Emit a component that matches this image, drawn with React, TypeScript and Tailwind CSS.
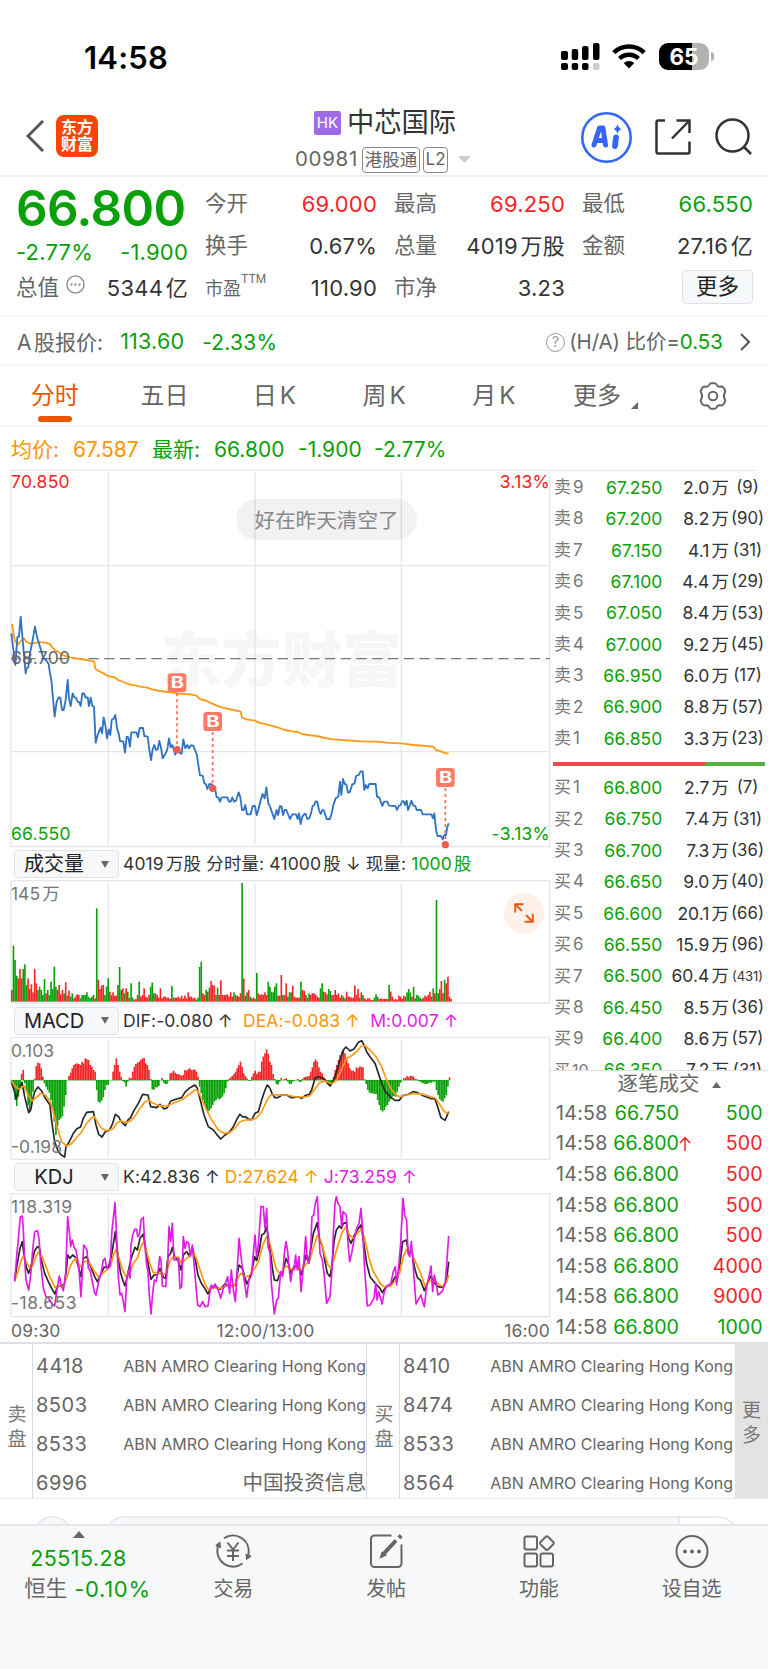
import type { ReactNode } from "react";
import clsx from "clsx";

const GREEN = "#09a009";
const RED = "#f32427";
const ORANGE = "#ff9500";
const MAGENTA = "#e21ae8";

const asks = [
  ["卖9", "67.250", "2.0万", "(9)"],
  ["卖8", "67.200", "8.2万", "(90)"],
  ["卖7", "67.150", "4.1万", "(31)"],
  ["卖6", "67.100", "4.4万", "(29)"],
  ["卖5", "67.050", "8.4万", "(53)"],
  ["卖4", "67.000", "9.2万", "(45)"],
  ["卖3", "66.950", "6.0万", "(17)"],
  ["卖2", "66.900", "8.8万", "(57)"],
  ["卖1", "66.850", "3.3万", "(23)"],
];

const bids = [
  ["买1", "66.800", "2.7万", "(7)"],
  ["买2", "66.750", "7.4万", "(31)"],
  ["买3", "66.700", "7.3万", "(36)"],
  ["买4", "66.650", "9.0万", "(40)"],
  ["买5", "66.600", "20.1万", "(66)"],
  ["买6", "66.550", "15.9万", "(96)"],
  ["买7", "66.500", "60.4万", "(431)"],
  ["买8", "66.450", "8.5万", "(36)"],
  ["买9", "66.400", "8.6万", "(57)"],
  ["买10", "66.350", "7.2万", "(31)"],
];

const ticks = [
  { price: "66.750", volume: "500", up: false },
  { price: "66.800", volume: "500", up: true, arrow: true },
  { price: "66.800", volume: "500", up: true },
  { price: "66.800", volume: "500", up: true },
  { price: "66.800", volume: "500", up: true },
  { price: "66.800", volume: "4000", up: true },
  { price: "66.800", volume: "9000", up: true },
  { price: "66.800", volume: "1000", up: false },
];

const BROKER = "ABN AMRO Clearing Hong Kong";
const sellBrokers = [
  ["4418", BROKER],
  ["8503", BROKER],
  ["8533", BROKER],
  ["6996", "中国投资信息"],
];
const buyBrokers = [
  ["8410", BROKER],
  ["8474", BROKER],
  ["8533", BROKER],
  ["8564", BROKER],
];

// chart series, three units per pixel; the afternoon half starts at x = 810
const price = {
  am: "34,520 46,615 52,532 57,530 62,470 68,540 77,640 80,625 85,622 90,580 97,545 105,500 112,535 120,560 130,595 138,600 146,612 150,640 154,660 164,770 170,725 176,712 181,713 186,750 191,750 197,720 203,660 207,715 212,738 218,700 223,712 228,713 233,725 238,727 242,738 247,700 252,700 257,713 263,712 267,738 272,713 277,738 282,740 287,848 292,828 297,815 302,803 306,820 311,772 316,795 321,835 326,808 331,825 335,780 341,776 346,765 351,805 356,820 360,843 370,845 375,878 380,830 385,832 390,860 394,817 409,817 414,832 419,804 429,804 433,828 443,830 448,870 453,900 458,868 463,855 468,870 473,868 478,843 484,868 488,895 497,880 502,868 507,835 512,862 517,855 526,884 533,860 540,880 545,881 550,838 556,865 562,855 567,865 573,856 580,857 585,870 590,882 595,915 600,946 608,947 613,970 618,973 622,987 628,972 636,973 640,990 646,990 650,1012 655,1012 660,1025 665,1012 682,1012 687,1025 692,1025 697,1012 702,1025 708,1022 716,997 721,1012 726,1050 731,1050 736,1035 741,1063 752,1063 758,1038 765,1038 770,1065 775,1050 782,1020 788,1002 794,1015 799,982 805,1030 810,1040",
  pm: "0,1040 13,1077 20,1050 24,1065 30,1038 35,1040 39,1065 44,1050 49,1050 60,1077 67,1063 78,1063 83,1077 87,1060 92,1092 97,1070 103,1062 107,1062 112,1077 118,1075 123,1060 128,1038 133,1035 137,1024 142,1025 147,1050 152,1062 157,1050 162,1052 170,1077 180,1077 185,1060 190,1035 197,1015 205,1010 210,965 214,1005 219,957 224,972 229,973 234,998 239,997 247,973 254,970 258,948 266,945 272,934 278,934 283,990 288,975 293,985 298,972 317,972 321,1010 328,1013 337,1038 342,1025 352,1025 357,1037 376,1038 381,1050 386,1038 392,1035 397,1023 402,1025 405,1035 410,1022 414,1050 419,1038 424,1022 430,1037 436,1038 440,1050 453,1050 458,1063 484,1063 489,1075 493,1060 496,1090 499,1115 503,1128 513,1128 518,1138 523,1125 528,1125 531,1105 536,1090",
};
const average = {
  am: "36,492 41,525 46,545 54,553 62,544 72,535 80,546 92,551 106,549 115,546 130,547 150,552 156,562 165,570 176,577 190,586 210,592 240,597 270,602 282,604 286,626 296,633 310,640 324,648 346,653 354,660 370,666 390,674 408,676 420,680 442,683 455,688 480,693 510,697 540,701 570,703 588,706 600,717 620,723 636,731 650,737 668,743 700,750 722,755 726,773 740,778 765,782 775,787 800,793 810,796",
  pm: "0,796 25,803 45,810 65,814 85,816 95,822 115,825 140,828 165,834 190,838 230,841 275,844 320,845 350,848 400,851 430,855 470,858 490,860 498,870 515,875 528,880 536,880",
};
const dif = {
  am: "34,710 42,735 49,762 56,735 66,712 74,755 86,803 92,795 98,765 104,740 114,726 125,738 135,758 150,780 154,820 164,890 175,920 184,930 194,936 198,905 208,890 220,865 230,852 242,845 250,820 260,802 280,800 288,840 296,868 306,876 316,860 328,856 338,835 346,808 356,815 362,828 376,842 384,825 392,818 400,800 415,775 428,748 444,750 452,785 470,788 480,778 492,792 502,788 512,768 530,762 545,758 556,740 570,728 585,720 592,730 600,762 612,810 625,845 640,855 650,868 662,882 675,870 688,862 700,845 712,820 720,808 728,816 736,815 745,822 755,825 765,805 775,800 785,765 795,735 802,720 810,730",
  pm: "0,730 6,745 14,758 24,758 36,750 50,750 64,758 85,756 95,760 105,752 118,748 125,735 135,700 145,695 160,700 170,712 180,723 190,708 200,680 210,645 220,615 228,606 240,618 252,612 265,592 275,587 282,600 290,620 300,635 315,655 325,685 335,715 345,738 360,755 375,766 388,766 398,752 415,748 430,740 440,742 460,752 480,760 495,762 503,785 513,818 525,826 530,815 536,800",
};
const dea = {
  am: "34,708 44,722 54,732 64,728 72,722 82,745 96,768 108,758 122,745 136,750 150,768 160,800 172,850 185,890 200,903 212,898 228,880 245,860 260,835 275,818 283,815 292,830 305,850 320,857 338,852 350,835 362,828 378,833 392,828 404,815 420,790 435,770 446,765 458,774 480,782 500,784 520,774 545,765 565,750 585,735 592,736 602,755 615,785 635,825 655,855 672,865 690,862 705,850 718,832 735,825 755,825 770,818 785,800 800,768 810,752",
  pm: "0,752 8,748 20,750 50,750 80,756 105,756 120,752 135,732 150,712 165,708 185,716 200,706 215,672 230,640 245,632 262,618 275,602 285,602 300,615 318,635 335,665 350,705 365,735 380,752 390,755 410,750 430,745 460,748 485,756 497,760 510,780 522,798 530,805 536,803",
};
const kLine = {
  am: "44,360 52,310 60,265 67,245 72,285 80,325 86,340 94,315 104,272 112,260 118,262 124,300 134,340 145,365 155,385 165,402 172,380 185,378 194,370 200,320 203,285 210,295 218,285 226,292 234,315 243,350 250,295 260,290 268,310 276,330 284,350 292,365 302,345 312,322 326,320 334,290 346,215 354,290 362,340 370,365 375,378 382,350 392,300 405,262 412,270 420,235 430,222 438,270 446,320 453,358 462,345 472,345 480,325 490,352 497,355 504,290 512,280 517,262 524,290 534,300 543,330 550,285 560,275 566,285 578,265 586,300 594,345 604,370 614,385 624,402 632,382 645,378 660,388 675,372 690,380 706,375 717,315 727,325 740,372 752,350 764,290 770,302 778,270 785,225 793,220 800,200 806,240 810,265",
  pm: "0,265 8,330 13,360 22,362 30,340 38,340 48,295 55,310 62,340 72,320 85,315 93,345 100,320 108,285 115,305 122,270 130,220 142,188 148,235 158,262 166,310 172,340 180,350 186,315 192,245 199,210 208,198 214,205 220,190 229,188 236,235 243,250 252,228 262,210 273,195 280,240 290,310 300,350 312,365 320,375 330,385 337,398 346,382 362,375 376,350 382,355 390,310 398,245 409,240 416,278 426,275 434,325 442,352 452,362 463,392 472,370 483,348 492,368 504,380 518,382 526,370 531,350 536,305",
};
const dLine = {
  am: "46,358 54,335 62,305 70,288 78,305 90,325 98,318 108,288 116,276 126,290 138,320 150,352 165,382 178,378 190,378 200,355 208,325 218,305 228,295 240,320 250,308 262,302 272,315 284,335 296,350 308,340 322,328 332,318 340,285 348,268 356,290 366,325 378,350 388,345 400,310 412,295 422,262 430,245 440,275 450,312 460,338 474,338 490,345 500,335 510,302 520,290 535,292 545,312 555,300 568,288 580,278 590,298 602,335 614,370 625,390 640,382 660,385 680,378 700,380 712,358 722,340 735,350 748,348 764,325 776,305 788,255 800,230 810,250",
  pm: "0,250 8,285 18,325 30,342 42,325 52,318 65,328 80,322 95,330 108,312 118,305 128,270 142,226 152,240 164,285 174,315 184,325 194,290 204,255 216,218 228,200 238,225 250,235 264,218 274,208 284,235 296,290 308,330 320,352 332,372 345,382 362,378 380,358 390,335 400,290 410,268 424,275 436,305 450,335 465,378 480,362 495,362 508,375 520,380 530,365 536,345",
};
const jLine = {
  am: "44,365 50,290 56,225 61,170 67,168 70,210 74,300 78,360 86,390 92,345 98,270 104,215 112,212 117,235 122,310 130,385 138,410 146,415 155,430 164,438 170,395 178,348 184,378 190,392 197,340 203,170 208,215 212,260 217,240 222,262 228,270 233,300 238,340 243,410 247,340 251,255 256,262 261,270 265,325 270,330 276,360 284,400 288,405 296,365 304,335 310,300 315,295 320,325 330,320 336,210 345,128 350,235 355,350 360,405 365,400 370,425 375,455 380,360 385,330 390,355 393,255 398,225 404,208 410,208 413,230 418,225 423,180 430,172 434,250 440,315 444,335 448,405 453,462 458,400 463,360 468,365 475,330 479,290 483,300 487,378 497,380 502,330 507,200 512,245 517,190 522,300 530,300 535,295 540,385 545,380 550,230 555,265 560,245 566,250 571,290 577,255 583,320 588,380 593,435 600,440 608,425 615,440 624,438 629,400 634,375 640,385 645,372 650,380 658,400 662,415 670,385 678,365 683,350 689,400 694,330 700,390 706,425 711,340 717,235 722,280 728,330 734,370 740,412 746,365 750,345 755,345 760,280 765,225 770,290 774,265 778,215 783,140 790,140 795,205 800,145 804,260 810,280",
  pm: "0,280 4,370 13,462 20,420 25,415 32,335 38,350 43,280 48,245 53,275 58,330 62,365 67,330 72,330 77,285 82,330 87,290 93,395 98,345 102,300 107,230 112,300 117,310 122,260 126,170 131,165 136,130 142,110 146,200 150,280 157,300 162,340 170,430 180,410 186,330 190,220 195,130 199,110 204,130 210,140 215,200 219,155 229,165 234,250 239,305 245,280 252,240 260,205 267,190 273,145 278,210 284,330 292,438 300,435 312,415 317,370 321,420 326,395 332,415 336,432 342,400 350,378 362,372 370,335 376,320 380,375 386,320 392,250 399,115 404,165 410,180 414,280 419,290 424,245 429,310 438,432 447,415 453,405 458,425 463,440 470,380 478,345 483,318 488,395 493,345 500,380 504,405 510,400 518,392 526,365 531,300 536,228",
};

// one entry per minute: r = up, g = down, followed by the height
const volumes =
  "r35 g168 g125 g78 r70 r98 r70 g98 g112 g50 r70 r38 r52 r28 r98 r55 g35 g45 g35 g20 g68 r25 g35 g20 g60 g38 g105 g45 r35 r50 r22 r35 g25 r58 r18 r33 g15 g25 r10 r15 r22 r20 g10 g20 g20 g20 g28 g15 g10 g15 g20 r10 g280 r66 r38 r48 r50 g20 g45 g70 r30 r20 r28 r18 r18 g50 g104 g35 r40 g25 r40 g30 r12 g55 g12 r6 r8 r20 g60 r15 r20 r40 r15 r12 r20 g45 g57 g25 r25 r20 r12 r40 r10 r15 r15 r12 r12 r8 g47 g12 r12 r12 r15 r10 r18 r10 r18 r10 r28 r15 r15 r10 r12 g6 g12 g104 g120 r25 r20 g35 r30 g42 r62 r50 r48 g20 g42 r20 r64 r20 r20 r20 r22 r15 r28 r15 g28 g20 r18 r15 r25 g356 r70 r18 g28 r35 g15 r10 r12 r8 g86 r25 r20 r22 r20 r28 r20 g60 g45 g30 g28 g45 g55 r18 r18 r80 g20 r20 r55 g15 g28 g28 r48 r15 r12 r12 r12 g60 r35 r33 g20 r12 g25 r20 r25 r25 r22 r15 r12 g40 g55 r30 r28 r22 g38 g32 r20 r20 r35 r20 r25 r12 g20 r15 g10 r30 r15 r15 r12 r12 r48 r20 r38 r12 r28 g20 r10 r6 r10 r10 r5 r5 g12 g22 g15 r8 r10 r8 r8 r8 r8 g50 r30 r15 r6 r8 r6 r18 r15 r8 r18 r15 g28 g38 g28 r15 g45 r10 g20 g18 g12 r8 r12 r18 r15 r20 r30 r15 g40 r25 g305 g25 r38 r62 r25 g65 r55 r75 r15 r8".split(" ");

const histogram = [
  -5, -20, -60, -78, -50, -25, 18, 30, -10, -35, -75, -95, -70, -35, 4, 42, 52, 50, 35, 10, -10, -20, -30, -38, -60, -90,
  -125, -165, -140, -120, -115, -108, -80, -45, 0, 12, 22, 35, 45, 48, 50, 48, 45, 55, 50, 65, 62, 60, 45, 40, 30, 25,
  -30, -65, -68, -62, -52, -30, -15, -15, 0, 0, 25, 45, 65, 45, 25, 10, -3, -8, -20, -5, 7, 5, 25, 40, 48, 52, 55, 60,
  65, 66, 50, 45, 30, 3, -28, -30, -22, -22, -18, 0, 6, -8, -12, -12, -2, 20, 22, 28, 22, 18, 18, 15, 12, 15, 30, 28,
  32, 35, 30, 30, 32, 25, 10, -20, -40, -60, -75, -88, -95, -92, -85, -75, -65, -60, -55, -58, -55, -50, -40, -25, -5,
  3, 8, 12, 18, 25, 35, 45, 55, 40, 20, 12, 5, -2, -3, 10, 20, 28, 18, 25, 25, 55, 70, 80, 92, 78, 55, 45, 18, 3, -12,
  -14, -5, 6, 0, 3, 5, -5, -12, -12, -5, -2, 0, 3, -5, -6, 3, 8, 10, 10, 12, 25, 38, 55, 62, 55, 38, 25, 20, 8, 3, -5,
  -15, -18, -10, 10, 30, 45, 60, 75, 85, 90, 80, 65, 50, 35, 28, 28, 25, 38, 35, 40, 40, 38, 2, -12, -30, -38, -40,
  -40, -42, -42, -60, -75, -90, -95, -90, -80, -75, -65, -58, -50, -48, -50, -35, -20, -8, 0, 5, 6, 12, 8, 12, 12, 10,
  3, 2, -3, -5, -8, -10, -12, -12, -10, -8, -8, -5, -5, -30, -45, -58, -62, -65, -55, -45, -20, 8,
];

const STEP = 4.9;

function Line({ data, color, width = 5 }: { data: { am: string; pm: string }; color: string; width?: number }) {
  return (
    <g fill="none" stroke={color} strokeWidth={width} strokeLinejoin="round">
      <polyline points={data.am} />
      <polyline points={data.pm} transform="translate(810 0)" />
    </g>
  );
}

function Grid({ top, bottom }: { top: number; bottom: number }) {
  return (
    <g stroke="#e4e6ee" strokeWidth="4">
      <path d={`M33 ${top}V${bottom}M1649 ${top}V${bottom}`} />
      <path d={`M325 ${top + 7}V${bottom - 4}M765 ${top + 7}V${bottom - 4}M1204 ${top + 7}V${bottom - 4}`} />
      <path d={`M33 ${top}H1650M33 ${bottom}H1650`} />
    </g>
  );
}

function Marker({ x, y, dotY }: { x: number; y: number; dotY: number }) {
  return (
    <g>
      <path d={`M${x} ${y + 60}V${dotY}`} stroke="#ff6a55" strokeWidth="5" strokeDasharray="9 9" />
      <rect x={x - 28} y={y} width="56" height="57" rx="10" fill="#ff7967" />
      <text
        x={x - 19}
        y={y + 45}
        textLength="40"
        lengthAdjust="spacingAndGlyphs"
        fontSize="46"
        fontWeight="700"
        fill="#fff"
      >
        B
      </text>
      <circle cx={x} cy={dotY} r="11" fill="#f2594f" />
    </g>
  );
}

function PriceChart() {
  return (
    <div className="relative h-[377px] text-[17.5px] leading-5 tracking-[0.25px]">
      <div className="absolute left-[150px] top-[160px] text-[60px] font-black leading-none tracking-[0.4px] text-[#f6f6f6]">
        东方财富
      </div>
      <svg className="relative block h-[377px] w-[539px] overflow-visible tracking-normal" viewBox="33 30 1617 1131">
        <Grid top={31} bottom={1160} />
        <path d="M33 317H1650M33 875H1650" stroke="#e4e6ee" strokeWidth="4" />
        <path d="M33 596H1650" stroke="#777" strokeWidth="4" strokeDasharray="31 16.3" strokeDashoffset="4.4" />
        <Line data={average} color="#ff9a14" width={5.5} />
        <Line data={price} color="#2f74c2" width={5.5} />
        <Marker x={531} y={640} dotY={869} />
        <Marker x={638} y={756} dotY={985} />
        <Marker x={1336} y={924} dotY={1154} />
      </svg>
      <span className="absolute left-0 top-[2px] text-[#f32427]">70.850</span>
      <span className="absolute right-0 top-[2px] text-[#f32427]">3.13%</span>
      <span className="absolute left-0 top-[178px] text-[#666]">68.700</span>
      <span className="absolute bottom-[3px] left-0 text-[#09a009]">66.550</span>
      <span className="absolute bottom-[3px] right-0 text-[#09a009]">-3.13%</span>
      <div className="absolute left-[225px] top-[29px] flex h-[41px] w-[181px] items-center justify-center rounded-full bg-black/5 pt-[2px] text-[20.6px] tracking-normal text-[#888]">
        好在昨天清空了
      </div>
    </div>
  );
}

function IndicatorBar({ name, className, children }: { name: string; className?: string; children: ReactNode }) {
  return (
    <div className={clsx("flex items-center pl-[3px] pt-[1px]", className)}>
      <div className="flex h-[28px] w-[105px] shrink-0 items-center justify-between rounded border-[1.5px] border-[#e0e2ea] bg-[#f7f8fa] pr-[9px]">
        <span className="w-[78px] text-center text-[20px] leading-none text-[#222]">{name}</span>
        <svg className="h-[7px] w-[8px]" viewBox="0 0 8 7">
          <path d="M0 0h8L4 7z" fill="#666" />
        </svg>
      </div>
      <div className="ml-[4px] flex whitespace-pre text-[17.5px] leading-none tracking-[0.12px] text-[#333]">
        {children}
      </div>
    </div>
  );
}

function Charts() {
  return (
    <div className="w-[550px] shrink-0 pl-[11px]">
      <PriceChart />
      <IndicatorBar name="成交量" className="h-[33px]">
        <span>4019万股 分时量: 41000股 ↓ 现量: </span>
        <span className="text-[#09a009]">1000股</span>
      </IndicatorBar>
      <div className="relative h-[123px]">
        <svg className="block h-[123px] w-[539px] overflow-visible" viewBox="33 105 1617 369">
          <Grid top={107} bottom={474} />
          {volumes.map((v, i) => (
            <rect
              key={i}
              x={33 + i * STEP}
              y={470 - Number(v.slice(1))}
              width={STEP}
              height={Number(v.slice(1))}
              fill={v[0] === "r" ? RED : GREEN}
            />
          ))}
        </svg>
        <span className="absolute left-0 top-[4px] text-[17.5px] leading-5 text-[#777]">145万</span>
        <div className="absolute left-[493px] top-[13px] flex size-[40px] items-center justify-center rounded-full bg-[#fff0e9]">
          <svg className="size-[20px]" viewBox="0 0 20 20" fill="none" stroke="#ee5a0c" strokeWidth="1.9">
            <path d="M9.5 1.2H1.2v8.3M1.5 1.5L8 8M18.8 10.8v8h-8.3M18.5 18.5L12 12" />
          </svg>
        </div>
      </div>
      <IndicatorBar name="MACD" className="h-[34px]">
        <span>DIF:-0.080 ↑  </span>
        <span className="text-[#ff9500]">DEA:-0.083 ↑  </span>
        <span className="text-[#e21ae8]">M:0.007 ↑</span>
      </IndicatorBar>
      <div className="relative h-[123px]">
        <svg className="block h-[123px] w-[539px] overflow-visible" viewBox="33 576 1617 369">
          <Grid top={577} bottom={943} />
          {histogram.map((v, i) => (
            <rect
              key={i}
              x={33 + i * STEP}
              y={v > 0 ? 705 - v : 705}
              width={STEP}
              height={Math.abs(v)}
              fill={v > 0 ? RED : GREEN}
            />
          ))}
          <path d="M33 706H1350" stroke={GREEN} strokeWidth="1.5" />
          <Line data={dif} color="#262626" />
          <Line data={dea} color="#ff9a14" />
        </svg>
        <span className="absolute left-0 top-[4px] text-[17.5px] leading-5 text-[#777]">0.103</span>
        <span className="absolute bottom-[3px] left-0 text-[17.5px] leading-5 text-[#777]">-0.198</span>
      </div>
      <IndicatorBar name="KDJ" className="h-[33px]">
        <span>K:42.836 ↑ </span>
        <span className="text-[#ff9500]">D:27.624 ↑ </span>
        <span className="text-[#e21ae8]">J:73.259 ↑</span>
      </IndicatorBar>
      <div className="relative h-[124px]">
        <svg className="block h-[124px] w-[539px] overflow-visible" viewBox="33 99 1617 372">
          <Grid top={101} bottom={470} />
          <Line data={kLine} color="#262626" />
          <Line data={dLine} color={ORANGE} />
          <Line data={jLine} color={MAGENTA} />
        </svg>
        <span className="absolute left-0 top-[4px] text-[17.5px] leading-5 tracking-[0.5px] text-[#777]">118.319</span>
        <span className="absolute bottom-[4px] left-0 text-[17.5px] leading-5 tracking-[0.5px] text-[#777]">
          -18.653
        </span>
      </div>
      <div className="grid h-[25px] grid-cols-[1fr_auto_1fr] items-center pt-[2px] text-[17.5px] leading-none tracking-[0.15px] text-[#666]">
        <span>09:30</span>
        <span className="mr-[30px]">12:00/13:00</span>
        <span className="text-right">16:00</span>
      </div>
    </div>
  );
}

function BookRow({ row }: { row: string[] }) {
  const [level, px, volume, orders] = row;
  return (
    <div className="flex h-[31.4px] items-center text-[17.5px] leading-none">
      <span className={clsx("w-[44px] pl-px text-[#777]", level.length > 2 ? "text-[16px]" : "text-[17px]")}>
        {level}
      </span>
      <span className="w-[65.5px] text-right tracking-[0.1px] text-[#09a009]">{px}</span>
      <span className="w-[66.500px] text-right text-[#333]">{volume}</span>
      <span
        className={clsx(
          "ml-px w-[35px] text-center text-[#333]",
          orders.length > 4 ? "text-[13px]" : "text-[16.8px]",
        )}
      >
        {orders}
      </span>
    </div>
  );
}

function OrderBook() {
  return (
    <div className="flex w-[218px] flex-col pl-[3px]">
      <div className="h-[600px] shrink-0 overflow-hidden">
        <div className="ml-[-2px] h-px w-[206px] bg-[#e4e6ee]" />
        <div className="h-[0.8px]" />
        {asks.map((row) => (
          <BookRow key={row[0]} row={row} />
        ))}
        <div className="mt-[7.7px] flex h-[4px] w-[212px] bg-[#52b43c]">
          <div className="w-[154px] bg-[#ee4848] [clip-path:polygon(0_0,100%_0,calc(100%-4px)_100%,0_100%)]" />
        </div>
        <div className="h-[6px]" />
        {bids.map((row) => (
          <BookRow key={row[0]} row={row} />
        ))}
      </div>
      <div className="ml-[-3px] flex h-[28.4px] shrink-0 items-center justify-center border-t border-[#dcdfe8] pl-[20px] text-[20.5px] leading-none text-[#666]">
        逐笔成交
        <svg className="ml-[12px] h-[6px] w-[9px]" viewBox="0 0 9 6">
          <path d="M0 6h9L4.500 0z" fill="#666" />
        </svg>
      </div>
      {ticks.map((t, i) => (
        <div key={i} className="flex h-[30.6px] shrink-0 items-center text-[19.6px] leading-none">
          <span className="w-[54px] pl-[3px] tracking-[0.25px] text-[#666]">14:58</span>
          <span className="w-[72px] text-right text-[#09a009]">{t.price}</span>
          <span className="w-[14px] text-[#f32427]">
            {t.arrow && (
              <svg className="mb-[2px] h-[15px] w-[12px]" viewBox="0 0 12 15" fill="none" stroke={RED} strokeWidth="1.500">
                <path d="M6 15V1.500M1 7l5-5.500L11 7" />
              </svg>
            )}
          </span>
          <span className={clsx("w-[69.5px] text-right", t.up ? "text-[#f32427]" : "text-[#09a009]")}>{t.volume}</span>
        </div>
      ))}
    </div>
  );
}

function Brokers({ rows, className }: { rows: string[][]; className: string }) {
  return (
    <div className={clsx("flex flex-col pl-[3px] pt-[2px]", className)}>
      {rows.map(([code, name]) => (
        <div key={code} className="flex h-[39.1px] shrink-0 items-center justify-between leading-none text-[#666]">
          <span className="text-[20px] tracking-[0.5px]">{code}</span>
          <span className={clsx("whitespace-nowrap", name === BROKER ? "text-[16px]" : "text-[20.6px]")}>{name}</span>
        </div>
      ))}
    </div>
  );
}

function SideLabel({ text, className }: { text: string; className?: string }) {
  return (
    <div className={clsx("flex shrink-0 flex-col items-center text-[19px] leading-[25px] text-[#777]", className)}>
      {text.split("").map((c) => (
        <span key={c}>{c}</span>
      ))}
    </div>
  );
}

function StatusBar() {
  return (
    <div className="flex h-[92px] items-start justify-between pl-[84px] pr-[54px]">
      <span className="mt-[42px] text-[31px] font-semibold leading-none tracking-[0.2px] text-black">14:58</span>
      <div className="mt-[43px] flex items-start">
        <svg className="h-[27px] w-[39px]" viewBox="0 0 39 27">
          <rect x="0" y="8" width="7" height="9" rx="2" />
          <rect x="10.700" y="6" width="6.500" height="11" rx="2" />
          <rect x="21" y="3" width="6.500" height="14" rx="2" />
          <rect x="32" y="0" width="6.500" height="17" rx="2" />
          <rect x="0" y="20" width="7" height="7" rx="2" />
          <rect x="10.700" y="20" width="6.500" height="7" rx="2" />
          <rect x="21" y="20" width="6.500" height="7" rx="2" />
          <rect x="32" y="20" width="6.500" height="7" rx="2" fill="#ccc" />
        </svg>
        <svg className="ml-[12px] mt-[1px] h-[25px] w-[34px]" viewBox="0 0 34 25" fill="none" stroke="#000">
          <path d="M1.800 8.600a22 22 0 0 1 30.400 0" strokeWidth="4.600" />
          <path d="M7.500 14.500a14 14 0 0 1 19 0" strokeWidth="4.400" />
          <path d="M17 24.500l-5.300-5.400a7.600 7.600 0 0 1 10.600 0z" fill="#000" stroke="none" />
        </svg>
        <div className="ml-[13px] flex h-[27px] w-[50px] items-center justify-center rounded-[9px] bg-linear-to-r from-black from-66% to-[#b2b2b2] to-66% pt-px text-[22.5px] font-bold leading-none text-white">
          65
        </div>
        <div className="ml-[2px] mt-[9px] h-[9px] w-[3px] rounded-r-full bg-[#b2b2b2]" />
      </div>
    </div>
  );
}

function Header() {
  return (
    <div className="flex h-[85px] items-start justify-between border-b-2 border-[#eeeff1] pl-[26px] pr-[16px]">
      <div className="flex w-[236px] items-center pt-[23px]">
        <svg className="h-[32px] w-[18px]" viewBox="0 0 18 32" fill="none" stroke="#555" strokeWidth="3">
          <path d="M17 1L2 16l15 15" />
        </svg>
        <div className="ml-[12px] flex size-[42px] flex-col items-center justify-center rounded-[8px] bg-[#ff4402] text-[16px] font-bold leading-[17px] text-white">
          <span>东方</span>
          <span>财富</span>
        </div>
      </div>
      <div className="flex flex-col items-center pt-[17px]">
        <div className="flex h-[27px] items-center gap-[6px] text-[27.3px] leading-none text-[#333]">
          <span className="flex h-[24px] w-[27px] items-center justify-center rounded-[2px] bg-[#9f6ce8] text-[15px] text-white">
            HK
          </span>
          中芯国际
        </div>
        <div className="mt-[10px] flex h-[27px] items-center pr-[4px] text-[#666]">
          <span className="text-[20.5px] leading-none tracking-[0.7px]">00981</span>
          <span className="ml-[4px] flex h-[26px] w-[58px] items-center justify-center rounded-[4px] border-[1.5px] border-[#888] text-[17.500px] leading-none">
            港股通
          </span>
          <span className="ml-[3px] flex h-[26px] w-[25px] items-center justify-center rounded-[4px] border-[1.5px] border-[#888] text-[17px] leading-none">
            L2
          </span>
          <svg className="ml-[10px] h-[7px] w-[13px]" viewBox="0 0 13 7">
            <path d="M0 0h13L6.500 7z" fill="#ccc" />
          </svg>
        </div>
      </div>
      <div className="flex w-[244px] items-start justify-end pt-[20px]">
        <svg className="size-[51px]" viewBox="0 0 51 51" fill="none">
          <circle cx="25.500" cy="25.500" r="24.200" stroke="#3566fb" strokeWidth="2.600" />
          <path
            d="M13 33l5.500-17h3.500l2.500 17M16 28.500h8"
            stroke="#3566fb"
            strokeWidth="5"
            strokeLinejoin="round"
            strokeLinecap="round"
          />
          <path d="M35 25.500L34 34" stroke="#3566fb" strokeWidth="5.800" strokeLinecap="round" />
          <path d="M36.500 12q.800 4.200 4.500 5-3.700.8-4.500 5-.8-4.200-4.500-5 3.700-.8 4.500-5z" fill="#3566fb" />
        </svg>
        <svg className="ml-[23px] mt-[7px] size-[36px]" viewBox="0 0 36 36" fill="none" stroke="#333" strokeWidth="2.500">
          <path d="M10 1.500H3.200A1.700 1.700 0 0 0 1.500 3.200v29.600a1.700 1.700 0 0 0 1.700 1.700h29.600a1.700 1.700 0 0 0 1.700-1.700V22.500M17 19.500L34 2M21.500 1.500h13V14" />
        </svg>
        <svg className="ml-[24px] mt-[6px] size-[37px]" viewBox="0 0 37 37" fill="none" stroke="#333" strokeWidth="2.500">
          <circle cx="17.500" cy="17.500" r="16" />
          <path d="M28.500 28.500l7.500 7.500" />
        </svg>
      </div>
    </div>
  );
}

function Stat({ label, value, tone }: { label: ReactNode; value: string; tone?: string }) {
  return (
    <div className="flex h-[42px] items-center justify-between">
      <span className="text-[21.5px] text-[#666]">{label}</span>
      <span className={clsx("text-[22px] tracking-[0.2px]", tone ?? "text-[#333]")}>{value}</span>
    </div>
  );
}

function Quote() {
  return (
    <div className="flex h-[140px] border-b-2 border-[#f5f6f8] pl-[16px] leading-none">
      <div className="w-[172px]">
        <div className="pt-[7px] text-[49.500px] font-semibold tracking-[-0.6px] text-[#09a009]">66.800</div>
        <div className="mt-[7px] flex justify-between text-[22px] text-[#09a009]">
          <span className="tracking-[0.2px]">-2.77%</span>
          <span className="tracking-[0.2px]">-1.900</span>
        </div>
        <div className="mt-[12px] flex items-center text-[21.5px] text-[#666]">
          总值
          <svg className="mb-[8px] ml-[7px] size-[19px]" viewBox="0 0 19 19" fill="none" stroke="#888" strokeWidth="1.400">
            <circle cx="9.500" cy="9.500" r="8.600" />
            <path d="M4.500 9.500h2M8.500 9.500h2M12.500 9.500h2" strokeWidth="2" />
          </svg>
          <span className="ml-auto text-[22px] tracking-[0.2px] text-[#333]">5344亿</span>
        </div>
      </div>
      <div className="ml-[17px] w-[172px] pt-[6px]">
        <Stat label="今开" value="69.000" tone="text-[#f32427]" />
        <Stat label="换手" value="0.67%" />
        <Stat
          label={
            <span className="flex items-center pt-[2px] text-[18px]">
              市盈<span className="mb-[18px] text-[11.500px]">TTM</span>
            </span>
          }
          value="110.90"
        />
      </div>
      <div className="ml-[17px] w-[171px] pt-[6px]">
        <Stat label="最高" value="69.250" tone="text-[#f32427]" />
        <Stat label="总量" value="4019万股" />
        <Stat label="市净" value="3.23" />
      </div>
      <div className="ml-[17px] w-[171px] pt-[6px]">
        <Stat label="最低" value="66.550" tone="text-[#09a009]" />
        <Stat label="金额" value="27.16亿" />
        <div className="ml-auto mt-[3px] flex h-[34px] w-[71px] items-center justify-center rounded-[4px] border-[1.5px] border-[#e0e2ea] bg-[#f7f8fa] text-[21.500px] text-[#222]">
          更多
        </div>
      </div>
    </div>
  );
}

const tabs = ["五日", "日K", "周K", "月K"];

function Tabs() {
  return (
    <div className="grid h-[61px] grid-cols-7 border-b-2 border-[#f5f6f8] pt-px text-[24px] leading-none text-[#666]">
      <div className="relative flex items-center justify-center text-[#ee5500]">
        分时
        <div className="absolute bottom-[3px] left-[38px] h-[6px] w-[34px] rounded-[3px] bg-[#ee5500]" />
      </div>
      {tabs.map((t) => (
        <div key={t} className="flex items-center justify-center">
          {t}
        </div>
      ))}
      <div className="flex items-center justify-center pl-[4px]">
        更多
        <svg className="ml-[10px] mt-[18px] size-[7px]" viewBox="0 0 7 7">
          <path d="M7 0v7H0z" fill="#666" />
        </svg>
      </div>
      <div className="flex items-center justify-center">
        <svg className="h-[28px] w-[30px]" viewBox="0 0 30 28" fill="none" stroke="#666" strokeWidth="2">
          <path
            d="M11.500 2.500q.5-1.300 2-1.300h3q1.500 0 2 1.300.9 2.300 3.300 2.200l1.700-.1q1.500 0 2.200 1.300l1.300 2.300q.7 1.300-.2 2.500-1.900 3.300 0 6.600.9 1.200.2 2.500l-1.300 2.300q-.7 1.300-2.200 1.300l-1.700-.1q-2.400-.1-3.300 2.200-.5 1.300-2 1.300h-3q-1.500 0-2-1.300-.9-2.300-3.300-2.200l-1.700.1q-1.500 0-2.200-1.300L3 19.800q-.7-1.300.2-2.500 1.900-3.300 0-6.600-.9-1.200-.2-2.500l1.300-2.300q.7-1.300 2.200-1.300l1.700.1q2.400.1 3.300-2.200z"
            strokeLinejoin="round"
          />
          <circle cx="15" cy="14" r="4.300" />
        </svg>
      </div>
    </div>
  );
}

function NavItem({ label, children }: { label: string; children: ReactNode }) {
  return (
    <div className="flex w-[152.75px] flex-col items-center pt-[7px] text-[#666]">
      <svg className="size-[36px]" viewBox="0 0 36 36" fill="none" stroke="#666" strokeWidth="2">
        {children}
      </svg>
      <span className="mt-[10px] text-[20px] leading-none">{label}</span>
    </div>
  );
}

function BottomNav() {
  return (
    <div className="flex h-[145px] border-t-2 border-[#e4e6ea] bg-[#f7f8fa]">
      <div className="flex w-[157px] flex-col items-center pt-[5px] leading-none text-[#09a009]">
        <svg className="h-[7px] w-[12px]" viewBox="0 0 12 7">
          <path d="M0 7h12L6 0z" fill="#666" />
        </svg>
        <span className="mt-[10px] text-[21.500px] tracking-[0.4px]">25515.28</span>
        <span className="ml-[18px] mt-[8px] flex items-center gap-[7px] text-[22px] tracking-[0.7px]">
          <span className="text-[21.500px] tracking-normal text-[#666]">恒生</span>-0.10%
        </span>
      </div>
      <NavItem label="交易">
        <path d="M9 5.200A15.800 15.800 0 0 1 33.600 20.500q-.3 2.500-1.400 5M27.500 30.500A15.800 15.800 0 0 1 2.600 14.500q.3-2 1-3.700" />
        <path d="M1 13l3.500-2.800L5 15M36 22.500l-4 3-.5-4.500" />
        <path d="M12.500 9.500l5.500 7 5.500-7M18 16.500v11.500M12 17.500h12M12 23h12" />
      </NavItem>
      <NavItem label="发帖">
        <path d="M23.500 2.500H6.500a3.500 3.500 0 0 0-3.500 3.500v24.500a3.500 3.500 0 0 0 3.500 3.500H30a3.500 3.500 0 0 0 3.500-3.500V11.500" />
        <path d="M15 21.500L28 7.500M31 4.800l2.200-2.300" strokeWidth="4" />
        <path d="M13 24l1.200-4 3 2z" fill="#666" />
      </NavItem>
      <NavItem label="功能">
        <rect x="3.500" y="3.500" width="12.500" height="13" rx="2" />
        <rect x="3.500" y="20.500" width="12.500" height="13" rx="2" />
        <rect x="19.500" y="20.500" width="12.500" height="13" rx="2" />
        <path d="M24.800 3.700a1.500 1.500 0 0 1 2.200 0l5.300 5.300a1.500 1.500 0 0 1 0 2.200L27 16.500a1.500 1.500 0 0 1-2.200 0l-5.300-5.300a1.500 1.500 0 0 1 0-2.200z" />
      </NavItem>
      <NavItem label="设自选">
        <circle cx="18" cy="18.500" r="15.500" />
        <g fill="#666" stroke="none">
          <circle cx="11" cy="18.500" r="1.900" />
          <circle cx="18" cy="18.500" r="1.900" />
          <circle cx="25" cy="18.500" r="1.900" />
        </g>
      </NavItem>
    </div>
  );
}

export default function App() {
  return (
    <div className="h-[1669px] w-[768px] overflow-hidden bg-white font-['Inter','Noto_Sans_CJK_SC',sans-serif] [text-autospace:normal]">
      <StatusBar />
      <Header />
      <Quote />
      <div className="flex h-[49px] items-center border-b-2 border-[#f5f6f8] pl-[17px] pr-[18px] pt-[3px] text-[20.500px] leading-none text-[#666]">
        <span className="text-[21px]">A股报价:</span>
        <span className="ml-[17px] text-[21.500px] tracking-[0.2px] text-[#09a009]">113.60</span>
        <span className="ml-[18px] text-[21px] tracking-[0.2px] text-[#09a009]">-2.33%</span>
        <span className="ml-auto flex size-[19px] items-center justify-center rounded-full border-[1.5px] border-[#999] text-[14px] text-[#999]">
          ?
        </span>
        <span className="ml-[4px] tracking-[-0.1px]">
          (H/A) 比价=<span className="tracking-normal text-[#09a009]">0.53</span>
        </span>
        <svg className="ml-[17px] h-[18px] w-[10px]" viewBox="0 0 10 18" fill="none" stroke="#555" strokeWidth="2">
          <path d="M1 1l8 8-8 8" />
        </svg>
      </div>
      <Tabs />
      <div className="flex h-[43px] items-center whitespace-pre pl-[11px] pt-[1px] text-[21px] leading-none text-[#09a009]">
        <span className="w-[62px] text-[#ff9500]">均价:</span>
        <span className="w-[79px] text-[#ff9500]">67.587</span>
        <span className="w-[62px]">最新:</span>
        <span className="w-[84px]">66.800</span>
        <span className="w-[76px]">-1.900</span>
        <span>-2.77%</span>
      </div>
      <div className="flex h-[872px]">
        <Charts />
        <OrderBook />
      </div>
      <div className="flex h-[157px] border-b border-t-2 border-b-[#e4e6ea] border-t-[#dcdfe8]">
        <SideLabel text="卖盘" className="w-[33px] border-r-[1.5px] border-[#d8dbe4] pl-[2px] pt-[58px]" />
        <Brokers rows={sellBrokers} className="w-[333px]" />
        <SideLabel text="买盘" className="w-[34px] border-x-[1.5px] border-[#d8dbe4] pl-[2px] pt-[58px]" />
        <Brokers rows={buyBrokers} className="w-[335px] pr-[2px]" />
        <SideLabel text="更多" className="mt-[-2px] w-[33px] bg-[#e3e3e3] pt-[56px]" />
      </div>
      <div className="flex h-[25px] items-start overflow-hidden pl-[32px] pt-[17px]">
        <div className="size-[41px] shrink-0 rounded-full border-2 border-[#e8eaee] bg-[#f7f8fa]" />
        <div className="ml-[30px] flex h-[44px] w-[636px] shrink-0 overflow-hidden rounded-full border-2 border-[#e8eaee]">
          <div className="w-[575px] border-r-2 border-[#e8eaee] bg-[#f7f8fa]" />
        </div>
      </div>
      <BottomNav />
    </div>
  );
}
